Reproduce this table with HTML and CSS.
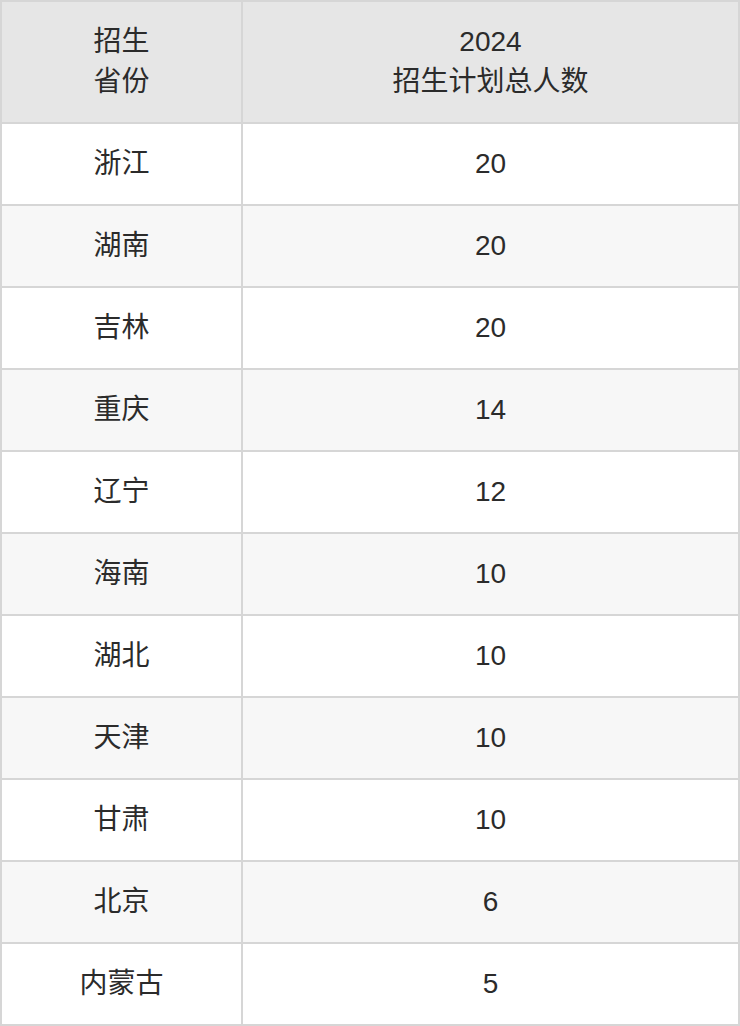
FILE: index.html
```html
<!DOCTYPE html>
<html lang="zh">
<head>
<meta charset="utf-8">
<link rel="stylesheet" href="styles.css">
</head>
<body>
<div class="table">
  <div class="cell head">招生<br>省份</div>
  <div class="cell head">2024<br>招生计划总人数</div>
  <div class="cell">浙江</div><div class="cell">20</div>
  <div class="cell alt">湖南</div><div class="cell alt">20</div>
  <div class="cell">吉林</div><div class="cell">20</div>
  <div class="cell alt">重庆</div><div class="cell alt">14</div>
  <div class="cell">辽宁</div><div class="cell">12</div>
  <div class="cell alt">海南</div><div class="cell alt">10</div>
  <div class="cell">湖北</div><div class="cell">10</div>
  <div class="cell alt">天津</div><div class="cell alt">10</div>
  <div class="cell">甘肃</div><div class="cell">10</div>
  <div class="cell alt">北京</div><div class="cell alt">6</div>
  <div class="cell">内蒙古</div><div class="cell">5</div>
</div>
</body>
</html>
```
FILE: styles.css
```css
html, body {
  margin: 0;
  padding: 0;
  background: #ffffff;
}
.table {
  width: 740px;
  box-sizing: border-box;
  display: grid;
  grid-template-columns: 239px 1fr;
  grid-template-rows: 120px repeat(11, 80px);
  gap: 2px;
  padding: 2px;
  background: #d6d6d6;
  font-family: "Liberation Sans", "Noto Sans CJK SC", sans-serif;
  font-size: 28px;
  line-height: 40px;
  color: #2b2b2b;
}
.cell {
  background: #ffffff;
  display: flex;
  align-items: center;
  justify-content: center;
  text-align: center;
}
.cell.alt {
  background: #f7f7f7;
}
.cell.head {
  background: #e6e6e6;
}
```
